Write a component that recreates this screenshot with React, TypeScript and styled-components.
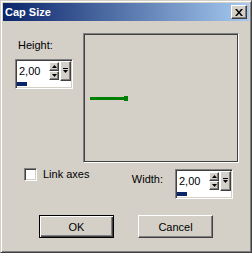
import React from "react";
import styled, { createGlobalStyle, css } from "styled-components";

const face = "#d4d0c8";

const GlobalStyle = createGlobalStyle`
  html, body { margin: 0; padding: 0; background: ${face}; }
  body {
    font-family: "Liberation Sans", Arial, sans-serif;
    font-size: 11px;
    color: #000;
  }
`;

const raised = css`
  box-sizing: border-box;
  border: 1px solid;
  border-color: #fff #404040 #404040 #fff;
  box-shadow: inset -1px -1px #808080;
  background: ${face};
`;

const sunken = css`
  box-sizing: border-box;
  border: 1px solid;
  border-color: #808080 #fff #fff #808080;
  box-shadow: inset 1px 1px #404040, inset -1px -1px ${face};
`;

const Window = styled.div`
  width: 252px;
  height: 253px;
  box-sizing: border-box;
  border: 1px solid;
  border-color: ${face} #404040 #404040 ${face};
  box-shadow: inset 1px 1px #fff, inset -1px -1px #808080;
  padding: 2px;
  background: ${face};
  display: flex;
  flex-direction: column;
`;

const TitleBar = styled.div`
  height: 18px;
  display: flex;
  align-items: center;
  padding: 0 2px;
  background: linear-gradient(to right, #0a246a, #a6caf0);
`;

const Title = styled.span`
  flex: 1;
  color: #fff;
  font-weight: bold;
  font-size: 11px;
`;

const CloseBtn = styled.div`
  ${raised};
  width: 16px;
  height: 14px;
  display: flex;
  align-items: center;
  justify-content: center;
`;

const Body = styled.div`
  flex: 1;
  padding-top: 12px;
  display: flex;
  flex-direction: column;
`;

const TopRow = styled.div`
  display: flex;
  padding-left: 12px;
`;

const LeftCol = styled.div`
  width: 68px;
  padding-top: 6px;
`;

const Label = styled.div`
  line-height: 13px;
  white-space: nowrap;
`;

const FieldLabel = styled(Label)`
  margin: 0 0 7px 3px;
`;

const Preview = styled.div`
  width: 156px;
  height: 130px;
  box-sizing: border-box;
  border: 1px solid;
  border-color: #808080 #fff #fff #808080;
  box-shadow: inset 0 0 0 1px #404040;
  svg { display: block; }
`;

const MidRow = styled.div`
  display: flex;
  align-items: flex-start;
  margin-top: 5px;
  padding: 0 16px 0 21px;
`;

const Check = styled.span`
  ${sunken};
  width: 13px;
  height: 13px;
  background: #fff;
`;

const CheckLabel = styled(Label)`
  margin-left: 6px;
`;

const WidthGroup = styled.div`
  margin-left: auto;
  margin-top: 1px;
  display: flex;
  align-items: flex-start;
  gap: 12px;
`;

const WidthLabel = styled(Label)`
  margin-top: 4px;
`;

const SpinFrame = styled.div`
  ${sunken};
  width: 58px;
  height: 30px;
  padding: 1px;
  background: #fff;
  display: flex;
  flex-direction: column;
`;

const SpinTop = styled.div`
  display: flex;
  height: 20px;
`;

const Value = styled.div`
  flex: 1;
  padding-left: 2px;
  line-height: 21px;
`;

const Arrows = styled.div`
  display: flex;
  flex-direction: column;
  padding-top: 1px;
  margin-right: 1px;
`;

const ArrowBtn = styled.div`
  ${raised};
  width: 10px;
  height: 9px;
  display: flex;
  align-items: center;
  justify-content: center;
`;

const DropBtn = styled.div`
  ${raised};
  width: 11px;
  height: 20px;
  display: flex;
  align-items: center;
  justify-content: center;
`;

const Meter = styled.div`
  height: 6px;
  padding: 1px 0;
  box-sizing: border-box;
`;

const MeterFill = styled.div`
  width: 10px;
  height: 100%;
  background: #0a246a;
`;

const ButtonRow = styled.div`
  display: flex;
  gap: 24px;
  margin-top: 16px;
  padding-left: 36px;
`;

const Button = styled.div<{ $default?: boolean }>`
  width: 75px;
  height: 23px;
  box-sizing: border-box;
  display: flex;
  align-items: center;
  justify-content: center;
  background: ${face};
  border: 1px solid;
  ${(p) =>
    p.$default
      ? css`
          border-color: #000;
          box-shadow: inset 1px 1px #fff, inset -1px -1px #404040, inset -2px -2px #808080;
        `
      : css`
          border-color: #fff #404040 #404040 #fff;
          box-shadow: inset -1px -1px #808080;
        `}
`;

const Up = () => (
  <svg width="5" height="3" viewBox="0 0 5 3">
    <path d="M2.5 0 L5 3 L0 3 Z" fill="#000" />
  </svg>
);

const Down = () => (
  <svg width="5" height="3" viewBox="0 0 5 3">
    <path d="M0 0 L5 0 L2.5 3 Z" fill="#000" />
  </svg>
);

const DropGlyph = () => (
  <svg width="5" height="6" viewBox="0 0 5 6">
    <rect x="0" y="0" width="5" height="1" fill="#000" />
    <path d="M0 2 L5 2 L2.5 5 Z" fill="#000" />
  </svg>
);

const SpinBox = ({ value }: { value: string }) => (
  <SpinFrame>
    <SpinTop>
      <Value>{value}</Value>
      <Arrows>
        <ArrowBtn><Up /></ArrowBtn>
        <ArrowBtn><Down /></ArrowBtn>
      </Arrows>
      <DropBtn><DropGlyph /></DropBtn>
    </SpinTop>
    <Meter>
      <MeterFill />
    </Meter>
  </SpinFrame>
);

export default function App() {
  return (
    <>
      <GlobalStyle />
      <Window>
        <TitleBar>
          <Title>Cap Size</Title>
          <CloseBtn>
            <svg width="8" height="7" viewBox="0 0 8 7">
              <path d="M0 0h2l2 2.5L6 0h2L5 3.5 8 7H6L4 4.5 2 7H0l3-3.5z" fill="#000" />
            </svg>
          </CloseBtn>
        </TitleBar>
        <Body>
          <TopRow>
            <LeftCol>
              <FieldLabel>Height:</FieldLabel>
              <SpinBox value="2,00" />
            </LeftCol>
            <Preview>
              <svg width="154" height="128" viewBox="0 0 154 128">
                <rect x="6" y="63" width="35" height="3" fill="#008000" />
                <rect x="40" y="62" width="4" height="5" fill="#008000" />
              </svg>
            </Preview>
          </TopRow>
          <MidRow>
            <Check />
            <CheckLabel>Link axes</CheckLabel>
            <WidthGroup>
              <WidthLabel>Width:</WidthLabel>
              <SpinBox value="2,00" />
            </WidthGroup>
          </MidRow>
          <ButtonRow>
            <Button $default>OK</Button>
            <Button>Cancel</Button>
          </ButtonRow>
        </Body>
      </Window>
    </>
  );
}
